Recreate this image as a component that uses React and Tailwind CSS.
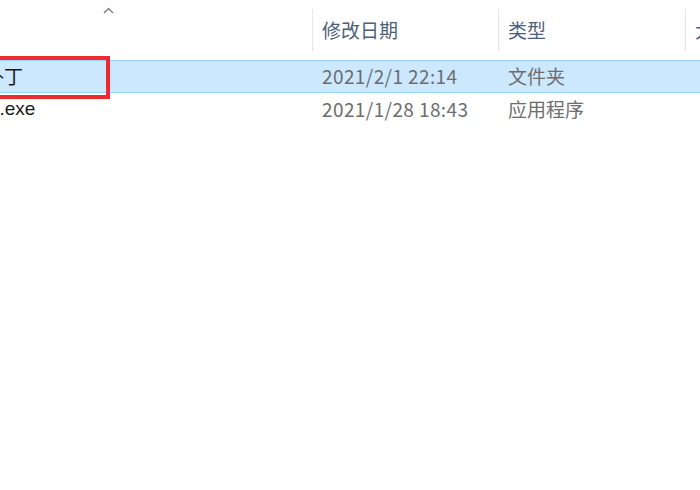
import React from "react";

const font = { fontFamily: '"Noto Sans CJK SC", "Noto Sans", sans-serif' };

function Row({ selected, name, nameOffset, date, type }) {
  return (
    <div
      className={
        "flex h-[33px] items-center border-y " +
        (selected ? "bg-[#cce8ff] border-[#99d1ff]" : "border-transparent")
      }
    >
      <div className="w-[312px] shrink-0 h-full flex items-center overflow-hidden">
        <span className={"whitespace-nowrap text-[19px] text-[#1a1a1a] " + nameOffset}>{name}</span>
      </div>
      <div className="w-[186px] shrink-0 pl-[10px] text-[19px] text-[#6d6d6d] whitespace-nowrap tracking-[0.4px]">{date}</div>
      <div className="w-[187px] shrink-0 pl-[10px] text-[19px] text-[#6d6d6d] whitespace-nowrap">{type}</div>
      <div className="flex-1" />
    </div>
  );
}

export default function App() {
  return (
    <div className="relative w-[700px] h-[490px] bg-white overflow-hidden" style={font}>
      {/* header */}
      <div className="flex h-[60px] py-[9px]">
        <div className="relative w-[312px] shrink-0">
          <svg className="absolute left-[103px] top-[-2px]" width="11" height="7" viewBox="0 0 11 7">
            <path d="M1 6 L5.5 1.5 L10 6" fill="none" stroke="#7a7a7a" strokeWidth="1.3" />
          </svg>
        </div>
        <div className="w-[186px] shrink-0 border-l border-[#e5e5e5] pl-[9px] flex items-center text-[19px] text-[#4c607a]">
          修改日期
        </div>
        <div className="w-[187px] shrink-0 border-l border-[#e5e5e5] pl-[9px] flex items-center text-[19px] text-[#4c607a]">
          类型
        </div>
        <div className="w-[80px] shrink-0 border-l border-[#e5e5e5] pl-[9px] flex items-center text-[19px] text-[#4c607a] whitespace-nowrap">
          大小
        </div>
      </div>

      <Row selected name="补丁" nameOffset="ml-[-15px]" date="2021/2/1 22:14" type="文件夹" />
      <Row name="setup.exe" nameOffset="ml-[-47px] font-['Liberation_Sans'] text-[18px]" date="2021/1/28 18:43" type="应用程序" />

      {/* red highlight annotation */}
      <div className="absolute left-[-10px] top-[56px] w-[120px] h-[43px] border-[4px] border-[#ee2a2f]" />
    </div>
  );
}
